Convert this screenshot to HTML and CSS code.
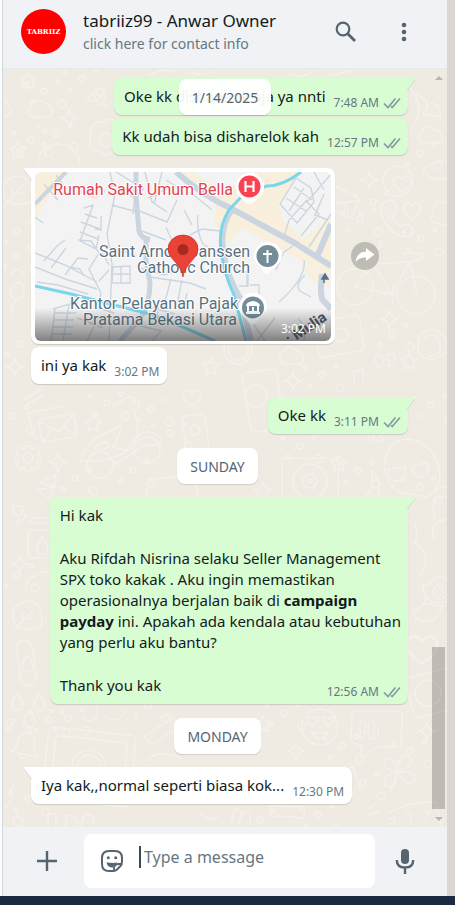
FILE: index.html
```html
<!DOCTYPE html>
<html lang="id">
<head>
<meta charset="utf-8">
<meta name="viewport" content="width=device-width, initial-scale=1">
<title>tabriiz99 - Anwar Owner</title>
<link rel="stylesheet" href="styles.css">
</head>
<body>
<svg class="defs" aria-hidden="true">
  <defs>
    <symbol id="ticks" viewBox="0 0 18 12"><path d="M1 6.500 5 10.500 12.500 1.500M8 9.500 9.300 10.500 17 1.500" fill="none" stroke="currentColor" stroke-width="1.600"/></symbol>
    <symbol id="tail-out" viewBox="0 0 9 13"><path d="M0 0h7.500q1.500 0 .6 1.200L0 12z" fill="currentColor"/></symbol>
    <symbol id="tail-in" viewBox="0 0 9 13"><path d="M9 0H1.500Q0 0 .9 1.200L9 12z" fill="currentColor"/></symbol>
    <g id="star"><path d="M0-8 2.500-3 8-2 4 2.500 5 8 0 5.500-5 8-4 2.500-8-2-2.500-3z"/></g>
    <g id="spark"><path d="M0-9Q1-1 9 0 1 1 0 9-1 1-9 0-1-1 0-9z"/></g>
    <g id="cloud"><path d="M-9 7a6 6 0 0 1-1-11 7 7 0 0 1 13-2 6 6 0 0 1 7 6 5 5 0 0 1-3 7z"/></g>
    <g id="dots"><circle r="3"/><circle cx="14" cy="-9" r="2"/><circle cx="-12" cy="11" r="2"/><circle cx="18" cy="13" r="4"/><circle cx="-17" cy="-7" r="1.500"/></g>
    <g id="mail"><rect x="-17" y="-11" width="34" height="22" rx="3"/><path d="m-16-9 16 12L16-9M-16 10-5-1M16 10 5-1"/></g>
    <g id="gear"><circle r="5"/><path d="m-3-12 6 0 1 4 4-3 4 4-3 4 4 1v5l-4 1 2 4-4 4-4-3-1 4h-5l-1-4-4 3-4-4 3-4-4-1v-5l4-1-3-4 4-4 4 3z"/></g>
    <g id="disc"><rect x="-28" y="-23" width="56" height="46" rx="4"/><circle r="17"/><circle r="7"/><circle r="2"/></g>
    <g id="face"><circle r="18"/><path d="M-8 6Q0 17 8 6zM-11-4q-4-6 1-6l3 2 3-2q5 1 0 6l-4 3zM5-4q-4-6 1-6l3 2 3-2q5 1 0 6l-4 3z"/></g>
    <g id="bike"><circle cx="-25" cy="10" r="18"/><circle cx="36" cy="18" r="19"/><path d="M-25 10-9-18 11 17 30-15-8-13M30-15 37 18M-9-18-13-27H-3q6-4 3-10M22-23q12-2 20 0v5l-12 3M11 17-25 10M3 17h14M13 7v20"/></g>
    <g id="phone"><path d="M-9-14q5-3 7 3l1 6-4 3q1 6 7 9l5-2q8 3 5 8-5 5-14 0-13-9-12-22 1-4 5-5z"/></g>
    <g id="heart"><path d="M0 8Q-13-1-7-7q4-3 7 2 4-5 8-1 4 6-8 14z"/></g>
    <g id="tablet"><rect x="-44" y="-36" width="88" height="72" rx="6"/><rect x="-36" y="-28" width="72" height="52" rx="3"/><circle r="17"/><circle r="12"/></g>
    <g id="drop"><path d="M0-9Q8 1 5 6-1 11-5 5-6 0 0-9z"/></g>
    <g id="camera"><path d="M-16-9h8l3-5H6l3 5h8v20h-33z"/><circle cy="1" r="7"/><circle cy="1" r="3"/></g>
    <g id="scooter"><circle cx="-19" cy="20" r="13"/><circle cx="28" cy="5" r="13"/><path d="M-39 18Q-31-8-8-14L2-20q-3 18-9 22l17 4q15-15 4-42M-36 16q20 3 43-9Q23-24 42-7q4 9-17 7Q8 14-4 18M-6-40 9-48q12 0 12 10l-7 5M-24 1l12-4 2 5-12 5z"/></g>
    <g id="bell"><path d="M-12 8Q-6 4-7-4-6-14 1-14q9 1 9 12 1 6 6 10zM-3 10q3 6 7 0M-1-14v-5h4v5"/></g>
    <g id="leaf"><path d="M-14 9q-8-20 14-23Q16-11 12 12-4 18-14 9zM-18 19 4-5M-6 6l-1-9M-3 3h9"/></g>
  </defs>
</svg>

<div class="screen">
  <div class="edge-left"></div>
  <main class="app">
    <header class="top">
      <div class="avatar">TABRIIZ</div>
      <div class="who">
        <h1 class="name">tabriiz99 - Anwar Owner</h1>
        <p class="hint">click here for contact info</p>
      </div>
      <button class="icon-btn search" aria-label="Search"><svg width="22" height="22" viewBox="0 0 22 22" fill="none" stroke="currentColor"><circle cx="8" cy="8" r="6.300" stroke-width="2.200"/><path d="m12.500 12.500 7.500 7.500" stroke-width="2.800"/></svg></button>
      <button class="icon-btn" aria-label="Menu"><svg width="6" height="20" viewBox="0 0 6 20" fill="currentColor"><circle cx="3" cy="3" r="2.300"/><circle cx="3" cy="10" r="2.300"/><circle cx="3" cy="17" r="2.300"/></svg></button>
    </header>

    <section class="chat">
      <svg class="wallpaper" viewBox="3 69 444 758" preserveAspectRatio="xMidYMid slice" aria-hidden="true">
        <g fill="none" stroke="#f5f1ea" stroke-width="1.500" stroke-linejoin="round">
          <use href="#star" x="28" y="81"/><use href="#cloud" x="42" y="110"/><use href="#spark" x="69" y="118"/><use href="#dots" x="82" y="79"/><use href="#dots" x="44" y="91"/>
          <circle cx="106" cy="140" r="7"/><path d="M91 133q0-12 12-11 9-7 14 3 12 3 7 14 2 12-10 12-8 8-15 0-13-2-8-18z"/>
          <path d="M88 101h8l-3-8-9 10M97 103q2-10 8-7 2 4-6 9h9M38 165q0-19 20-21 20 1 22 21M4 98l8 14-8 5"/>
          <path d="M150 75q14-8 25-3M193 72q10 6 19-2M290 74q14 5 23-3M330 76l24-6"/>
          <use href="#star" x="18" y="150"/><use href="#dots" x="31" y="140"/><use href="#dots" x="56" y="134"/>
          <use href="#cloud" x="432" y="136"/><use href="#dots" x="420" y="153"/><path d="M413 93q22 8 10 21l18 3q-1-13-10-14M410 88q18 22 0 41"/>
          <use href="#spark" x="369" y="180"/><use href="#mail" transform="translate(340 201) rotate(28)"/><circle cx="398" cy="181" r="15"/><use href="#heart" x="402" y="184"/><path d="M423 170q14-12 24-8v17q-18 3-24-9z"/>
          <use href="#phone" transform="translate(398 218) scale(1.200)"/><use href="#heart" x="412" y="211"/><rect x="434" y="201" width="17" height="22" rx="4" transform="rotate(20 438 210)"/>
          <use href="#dots" x="373" y="202"/><use href="#dots" x="360" y="219"/><use href="#dots" x="421" y="239"/><use href="#bike" x="380" y="277"/>
          <use href="#spark" x="389" y="319"/><use href="#dots" x="392" y="334"/><rect x="316" y="318" width="46" height="36" rx="4" transform="rotate(-10 340 335)"/><circle cx="341" cy="335" r="7"/>
          <path d="M418 351q-2-24 17-21 13 5 12 22-20 15-29-1zM424 338q12-8 16 6 1 13-12 12"/>
          <use href="#cloud" x="293" y="357"/><use href="#star" x="211" y="366"/><use href="#star" x="409" y="361"/><circle cx="238" cy="350" r="14"/><circle cx="238" cy="350" r="10"/>
          <path d="M375 357q8-4 8 3 0 7-6 8 2-6-2-6zM387 355q8-4 8 3 0 7-6 8 2-6-2-6zM354 384v-12l9-3v12"/><rect x="245" y="371" width="34" height="60" rx="4" transform="rotate(-9 260 390)"/><use href="#spark" x="293" y="381"/><use href="#dots" x="322" y="375"/>
          <use href="#leaf" x="19" y="190"/><use href="#dots" x="17" y="231"/><path d="M13 318q-4-17 8-20 8-13-3-16-12 8-4 17M10 277q6-14 15-2"/><use href="#dots" x="16" y="256"/><use href="#spark" x="15" y="367"/><use href="#dots" x="19" y="344"/>
          <path d="m23 400 19-11M26 405l19-11"/><use href="#mail" transform="translate(58 428) rotate(-10) scale(1.050)"/><path d="M39 439l-5-1-6-25 36-7"/><use href="#star" x="93" y="423"/><use href="#gear" x="28" y="458"/><use href="#spark" x="58" y="462"/><use href="#scooter" x="119" y="445"/>
          <use href="#heart" x="192" y="398"/><rect x="184" y="415" width="23" height="38" rx="3" transform="rotate(-8 195 433)"/><circle cx="195" cy="430" r="5"/><use href="#dots" x="107" y="403"/><use href="#dots" x="151" y="409"/><use href="#dots" x="13" y="416"/><use href="#dots" x="75" y="478"/><use href="#dots" x="170" y="433"/><use href="#dots" x="133" y="470"/>
          <path d="m39 483 17-8-5 25-14-10 19-3zM13 505l10 2-2 7 6 2-10 8 2-8-5-2zM28 523h26v7h-24q-4 9-1 28h24M28 523l5-5h18"/><use href="#drop" x="42" y="546"/><use href="#spark" x="20" y="564"/><path d="M27 594q-7-13 16-22 11-2 6 14M147 496q-3-14 8-17l38-4 5 20"/><use href="#leaf" x="29" y="615"/><use href="#dots" x="17" y="575"/>
          <circle cx="256" cy="396" r="11"/><path d="m367 441 7-17 9 16-6 2-4-8-1 8z"/><use href="#disc" x="310" y="481"/><use href="#star" x="339" y="463"/><use href="#star" x="263" y="491"/><use href="#dots" x="300" y="446"/><use href="#dots" x="358" y="471"/>
          <path d="M384 466q2-27 25-27 28 5 31 36-2 17-13 22l-27-5q-14-8-16-26zM388 469l17-2q2 13-9 14-8-1-8-12zM412 467l16-5q3 14-8 15-8-1-8-10zM366 495q9-4 5-25 14 12 5 30M433 494q8-10 14-7M435 520q-7-22 12-24"/>
          <use href="#dots" x="431" y="405"/><use href="#dots" x="420" y="487"/><path d="M414 542q20 13 6 34M415 524q5 16-3 20M434 540q-6-17 13-21"/><use href="#camera" transform="translate(440 591) rotate(-10)"/><path d="M412 613l10-7 6-9 5 9 10-1-7 13q-14 8-24-5z"/>
          <rect x="18" y="641" width="16" height="44" rx="6" transform="rotate(-8 26 660)"/><use href="#drop" x="27" y="664"/><use href="#drop" x="17" y="702"/><use href="#drop" x="39" y="702"/><use href="#drop" x="29" y="719"/><use href="#dots" x="48" y="720"/><use href="#bell" transform="translate(24 746) rotate(12)"/><use href="#tablet" transform="translate(89 767) rotate(6)"/>
          <path d="M82 716q8 10 15 0v-10M105 716q13 10 22-6M10 730q-8-12 4-11-1 8-8 11zM144 737l28-20 7 9-27 19zM145 762q13-15 37-3M5 808l8-10-4-5 5-9"/><circle cx="18" cy="821" r="5"/><path d="M48 827v-13h8v13M65 827l2-12 9 2v10M80 827l5-14 8 3v11M199 811q10 14 20 4"/>
          <use href="#dots" x="68" y="718"/><use href="#dots" x="148" y="706"/><use href="#dots" x="28" y="799"/><use href="#star" x="263" y="724"/><use href="#spark" x="296" y="751"/><use href="#face" x="320" y="727"/><path d="M356 711h42q5 0 4 6l-1 30h-25l-14 11-1-13q-11-2-10-7l1-24zM360 721v17h4v-7h5v8h5v-18h-5v6h-4v-6zM378 727v11M378 720v2"/>
          <g transform="translate(397 772)"><path d="M0 0q-17-4-12-13 7-5 12 13 1-19 11-16 10 8-11 16 21-2 17 9-8 7-17-9 0 18-11 14-7-9 11-14-4 14-7 20"/></g>
          <use href="#spark" x="427" y="731"/><use href="#dots" x="410" y="751"/><use href="#dots" x="363" y="783"/><use href="#dots" x="342" y="746"/><use href="#dots" x="284" y="713"/><use href="#heart" transform="translate(422 650) scale(1.700)"/><rect x="409" y="673" width="45" height="41" rx="4" transform="rotate(-15 430 693)"/><circle cx="428" cy="693" r="13"/>
          <path d="M232 823q0-14 5-14 7 1 2 15M244 813q4-6 6 0v12M272 812q-6-8 4-6l22 1q9-4 6 5 2 9-8 5l-20-1q-8 3-4-4zM343 772l10-6 7 22M370 815l11-4M369 809l9-7M386 815q14-12 50-13l6 25M388 819h7v5h-7M404 813h7v12M421 812h8l-6 12"/><use href="#dots" x="318" y="815"/><use href="#dots" x="260" y="820"/>
        </g>
      </svg>

      <div class="feed">
        <article class="bubble out tailed"><svg class="tail"><use href="#tail-out"/></svg><p class="text">Oke kk disharelok aja ya nnti</p><span class="meta">7:48 AM <svg class="ticks"><use href="#ticks"/></svg></span></article>
        <article class="bubble out follow"><p class="text">Kk udah bisa disharelok kah</p><span class="meta">12:57 PM <svg class="ticks"><use href="#ticks"/></svg></span></article>

        <article class="bubble in tailed location"><svg class="tail"><use href="#tail-in"/></svg>
          <svg class="map" viewBox="35 172 296 169" role="img" aria-label="Location">
            <defs><linearGradient id="shade" x1="0" y1="0" x2="0" y2="1"><stop offset="0" stop-color="#333" stop-opacity="0"/><stop offset="1" stop-color="#333" stop-opacity=".6"/></linearGradient></defs>
            <rect x="35" y="172" width="296" height="169" fill="#f4f3f4"/>
            <g fill="#f8f0dc">
              <path d="M35 172h30q-10 14-15 24-8 10-15 26zM180 172h14l70 46-8 10q-40-24-58-38zM222 191l39-19h40l-22 32 20 14 32-30v85l-18-4-12-8-60-33-12 16-11-13q-9-16 4-40z"/>
              <path d="M300 265l30 10v12l-16-5z"/>
            </g>
            <path d="M279 204 292 184l22-12h17v45l-28 22-20-19z" fill="#f4f3f4"/>
            <path d="m75 185 20 3 3 13-17-8z" fill="#fde4e4"/>
            <g fill="none" stroke="#ccd6e0" stroke-width="1.400">
              <path d="M84 208l9-3-13 36 16 8 3-14M81 222l19 7M85 214l12 4M80 232l18 7M101 216v14l-6-1M110 172l5 22-8 40 5 30-3 77M97 186l8 6M56 175l10 14M44 184l14 16M35 217l8 6M78 240l13 1 8 12-10 16 12 24-3 16M35 253l30 12 32 17M35 267l30 12 32 10M44 261l13-15 8-6M51 268l15-20M65 275l13-17 10 1M84 276l-4-7-12-2M37 282l21 3 30 9M100 249l9 16M99 281l10-11M106 247l30 8M116 172l20 12-3 30M112 205l25 7M113 188l23 10 8-10M137 210l30 12 10-22M145 172l7 30 15 10M162 172l-8 32M148 198l20-10M166 180l16 10M113 267l17-1v17h-18zM121 266v17M112 274h18M140 268l24 7 15-5M150 277l40 6 16 6M171 279l-7 26M182 280l-5 25M142 231l24 9M150 237l-7 12M166 227l7 16 16-2M190 192l22 18M198 215q-2 16 5 29l16 10M190 235l12-6 18 2M184 210l8 15"/>
              <path d="M53 309l24-7 1 7M55 309l-4 32M69 305l-6 36M54 313h22M54 320h20M53 327h20M51 334h21M77 318l18 6-8 17M89 323l14 5M98 308l16 5M133 324l28 7-9 10M145 306l30 8M160 298l-3 18M187 293l-3 15M232 288l16 30M247 274v13M250 285h9v16M279 302q28-25 25-42M248 316l17 25M280 204l16-26 15 10 3 14-17 21zM289 211l15-23M286 198l20 13M294 187l18 13M314 172l10 18M331 174l-24 28 12 12-18 22M307 200l-18 20-5 17M331 214l-22 33M324 194l-9 21 13 5"/>
              <path d="M276 270l8-18 15-10M242 271l6 2v13h-9M225 252v12l20 9M275 318l-18 23M304 341q2-17-6-22M305 275q-11 10-5 16l11 6"/>
            </g>
            <g fill="none" stroke="#cad5e0" stroke-width="5"><path d="M136 172v24l3 35q2 7 11 9M146 236v25l4 22q0 21-10 36l-20 22"/><path d="M231 211q-11 16-8 38 2 24 18 51l10 41M176 172q27 24 58 38l61 33 36 23M322 274q-2 18 0 25l9 10M331 224l-14 33" stroke-width="6"/><path d="M66 172 35 204" stroke-width="4"/></g>
            <g fill="none" stroke="#7bd6ec" stroke-width="3"><path d="M301 172q-18 14-34 14l-23 8-15 16q-11 17-8 40 2 21 13 45l12 46M35 286l36 8 39 10 40 10 19 7 46 20"/></g>
            <g class="map-label" fill="#58717f"><text x="250" y="257" text-anchor="end">Saint Arnold Janssen</text><text x="250" y="273" text-anchor="end">Catholic Church</text><text x="238" y="309" text-anchor="end">Kantor Pelayanan Pajak</text><text x="237" y="325" text-anchor="end">Pratama Bekasi Utara</text></g>
            <text class="map-label" x="233" y="195" text-anchor="end" fill="#df4350">Rumah Sakit Umum Bella</text>
            <g fill="#fff"><path d="M236 187a14 14 0 0 1 28 0c0 7-4 9-8 13q-7 7-12 1c-4-4-8-7-8-14zM254 256a14 14 0 0 1 28 0c0 8-8 10-12 16q-3 3-6 0c-3-6-10-8-10-16zM239 307a14 14 0 0 1 28 0c0 8-8 10-12 16q-3 3-6 0c-3-6-10-8-10-16z"/></g>
            <circle cx="249.500" cy="186.500" r="11" fill="#f94352"/><path d="M245.500 181v11M253.500 181v11M245 186.500h9" stroke="#fff" stroke-width="2.200"/>
            <circle cx="267.500" cy="256" r="11" fill="#738d99"/><path d="M267.500 250v13M263 254h9" stroke="#fff" stroke-width="2"/>
            <circle cx="253" cy="307.500" r="11" fill="#738d99"/><path d="M246 306q0-4 7-5 7 1 7 5zM247 306h2v5h3v-4h2v4h3v-5h2v6h1v2h-14v-2h1z" fill="#fff"/>
            <text class="street" transform="translate(290 345) rotate(-34)">: Mulia</text>
            <path d="M324 283v-7M322 279l3-5 3 5z" fill="#58717f" stroke="#58717f" stroke-width="1.500"/>
            <path d="M183 277c-2-14-15-18-15-28a15 14 0 0 1 30 0c0 10-13 14-15 28z" fill="#ea4335" stroke="#c5221f" stroke-width=".6"/><circle cx="183" cy="249.500" r="5.500" fill="#a52a22"/>
            <rect x="35" y="308" width="296" height="33" fill="url(#shade)"/>
          </svg>
          <span class="map-time">3:02 PM</span>
          <button class="forward" aria-label="Forward"><svg width="20" height="16" viewBox="0 0 20 16"><path d="M11 0l8.500 6.500L11 13V9.500Q4 9 .5 14.500 1.500 4 11 3.500z" fill="#fff"/></svg></button>
        </article>
        <article class="bubble in follow"><p class="text">ini ya kak</p><span class="meta">3:02 PM</span></article>

        <article class="bubble out tailed"><svg class="tail"><use href="#tail-out"/></svg><p class="text">Oke kk</p><span class="meta">3:11 PM <svg class="ticks"><use href="#ticks"/></svg></span></article>

        <div class="day">SUNDAY</div>

        <article class="bubble out tailed long"><svg class="tail"><use href="#tail-out"/></svg>
          <p class="line">Hi kak</p>
          <p class="line">Aku Rifdah Nisrina selaku Seller Management<br>SPX toko kakak . Aku ingin memastikan<br>operasionalnya berjalan baik di <strong>campaign</strong><br><strong>payday</strong> ini. Apakah ada kendala atau kebutuhan<br>yang perlu aku bantu?</p>
          <div class="last"><p class="text">Thank you kak</p><span class="meta">12:56 AM <svg class="ticks"><use href="#ticks"/></svg></span></div>
        </article>

        <div class="day">MONDAY</div>

        <article class="bubble in tailed"><svg class="tail"><use href="#tail-in"/></svg><p class="text">Iya kak,,normal seperti biasa kok...</p><span class="meta">12:30 PM</span></article>
      </div>

      <div class="scrollbar" aria-hidden="true"><i class="arrow up"></i><i class="thumb"></i><i class="arrow down"></i></div>
      <div class="sticky"><div class="day">1/14/2025</div></div>
    </section>

    <footer class="composer">
      <button class="icon-btn" aria-label="Attach"><svg width="22" height="22" viewBox="0 0 22 22" stroke="currentColor" stroke-width="2.400"><path d="M11 1v20M1 11h20"/></svg></button>
      <div class="field">
        <button class="icon-btn" aria-label="Emoji"><svg width="24" height="24" viewBox="0 0 24 24" fill="none" stroke="currentColor" stroke-width="2"><path d="M22 12.500V9q0-7-7-7H9Q2 2 2 9v6q0 7 7 7h4.500q2 0 3.500-1.500l3.500-3.500q1.500-1.500 1.500-4.500z"/><path d="M14 22v-2.500q0-4.500 4.500-4.500H21" stroke-width="1.800"/><path d="M6.500 13.300q5.500 1.200 11 .2l-3.500 2.800-.8 2.200q-5.700.4-6.700-5.200z" fill="currentColor" stroke="none"/><circle cx="8.300" cy="8.800" r="1.500" fill="currentColor" stroke="none"/><circle cx="15.700" cy="8.800" r="1.500" fill="currentColor" stroke="none"/></svg></button>
        <span class="caret"></span>
        <input class="input" type="text" aria-label="Type a message" placeholder="Type a message">
      </div>
      <button class="icon-btn mic" aria-label="Voice message"><svg width="20" height="26" viewBox="0 0 20 26" fill="none" stroke="currentColor"><rect x="6" y="1" width="8" height="15" rx="4" fill="currentColor" stroke="none"/><path d="M1.800 12q0 7.500 8.200 7.500t8.200-7.500M10 19v7" stroke-width="2.400"/></svg></button>
    </footer>
  </main>
  <div class="edge-right"></div>
</div>
<div class="taskbar"></div>
</body>
</html>
```

FILE: styles.css
```css
* { box-sizing: border-box; }

body {
  margin: 0;
  min-height: 100vh;
  display: flex;
  flex-direction: column;
  font-family: "Noto Sans", "Open Sans", sans-serif;
  font-size: 15px;
  line-height: 21px;
  color: #111b21;
}

h1, p { margin: 0; font-weight: 400; }
button { padding: 0; border: 0; background: none; color: inherit; }
svg { display: block; }
.defs { position: absolute; width: 0; height: 0; }

.screen { flex: 1; display: flex; }
.edge-left { width: 3px; background: #fbfcfc; border-right: 1px solid #d1d7db; }
.edge-right { width: 8px; background: #dad6d2; }
.taskbar { height: 9px; background: #1b2a41; }

.app { flex: 1; min-width: 0; display: flex; flex-direction: column; }

.top {
  display: flex;
  align-items: center;
  height: 69px;
  padding: 0 40px 5px 18px;
  background: #f0f2f5;
  color: #54656f;
  border-bottom: 1px solid #e6e8eb;
}
.avatar {
  display: grid;
  place-items: center;
  width: 45px;
  height: 45px;
  border-radius: 50%;
  background: #fe0000;
  color: #fff;
  font: 700 7px "DejaVu Serif", serif;
}
.who { flex: 1; margin-left: 17px; white-space: nowrap; }
.name { font-size: 17px; line-height: 24px; color: #111b21; }
.hint { font-size: 14px; line-height: 22px; color: #667781; }
.icon-btn { display: grid; place-items: center; color: #54656f; }
.search { margin-right: 44px; }

.chat { position: relative; flex: 1; display: flex; background: #efeae2; }
.wallpaper { position: absolute; inset: 0; width: 100%; height: 100%; }

.feed {
  position: relative;
  flex: 1;
  min-width: 0;
  display: flex;
  flex-direction: column;
  padding: 9px 24px 22px;
}

.bubble {
  position: relative;
  display: flex;
  align-items: flex-end;
  gap: 8px;
  padding: 8px 8px 5px 10px;
  border-radius: 8px;
  box-shadow: 0 1px 1px rgba(11, 20, 26, .16);
  white-space: nowrap;
  margin-top: 13px;
}
.bubble:first-child { margin-top: 0; }
.bubble.follow { margin-top: 3px; }
.in { align-self: flex-start; margin-left: 4px; background: #fff; }
.out { align-self: flex-end; padding-right: 7px; background: #d9fdd3; }
.in.tailed { border-top-left-radius: 0; }
.out.tailed { border-top-right-radius: 0; }
.tail { position: absolute; top: 0; width: 9px; height: 13px; filter: drop-shadow(0 1px 0 rgba(11, 20, 26, .12)); }
.out .tail { right: -8px; color: #d9fdd3; }
.in .tail { left: -8px; color: #fff; }
.text { padding-bottom: 3px; }
.meta { display: flex; align-items: center; gap: 4px; font-size: 12px; line-height: 15px; color: #667781; }
.ticks { width: 18px; height: 12px; color: #8696a0; }

.long { display: block; }
.line { margin-bottom: 22px; }
.last { display: flex; align-items: flex-end; justify-content: space-between; }

.location { display: block; width: 80%; max-width: 304px; padding: 4px 4px 3px; }
.map { width: 100%; border-radius: 6px; }
.map-label { font: 400 16px Roboto, sans-serif; paint-order: stroke; stroke: #fff; stroke-width: 2px; }
.street { font: 700 15px Roboto, sans-serif; fill: #47535e; }
.map-time { position: absolute; right: 9px; bottom: 8px; font-size: 12px; line-height: 15px; color: #fff; }
.forward {
  position: absolute;
  left: calc(100% + 16px);
  top: 74px;
  display: grid;
  place-items: center;
  width: 28px;
  height: 28px;
  border-radius: 50%;
  background: #bfbcb6;
}

.day {
  align-self: center;
  margin-top: 14px;
  padding: 8px 13px 7px;
  border-radius: 8px;
  background: #fff;
  box-shadow: 0 1px 1px rgba(11, 20, 26, .13);
  font-size: 14px;
  line-height: 21px;
  color: #54656f;
}
.sticky { position: absolute; top: 10px; left: 0; right: 0; display: flex; justify-content: center; }
.sticky .day { margin: 0; background: rgba(255, 255, 255, .94); }

.scrollbar { position: relative; width: 15px; display: flex; flex-direction: column; align-items: center; padding: 7px 2px 6px 0; }
.thumb { width: 13px; height: 162px; margin: auto 0 8px; background: rgba(0, 0, 0, .2); }
.arrow { border: 4px solid transparent; }
.up { border-top: 0; border-bottom-color: #b9b5af; }
.down { border-bottom: 0; border-top-color: #b9b5af; }

.composer {
  display: flex;
  align-items: center;
  height: 69px;
  padding: 0 32px 2px 33px;
  background: #f0f2f5;
}
.field {
  flex: 1;
  min-width: 0;
  display: flex;
  align-items: center;
  height: 54px;
  margin: 0 20px 0 26px;
  padding: 0 16px;
  border-radius: 8px;
  background: #fff;
}
.caret { width: 2px; height: 22px; margin: 0 3px 8px 15px; background: #3b4a54; }
.input { flex: 1; min-width: 0; padding: 0; margin-bottom: 6px; border: 0; outline: 0; background: none; font: inherit; font-size: 16px; }
.input::placeholder { color: #667781; opacity: 1; }
```
